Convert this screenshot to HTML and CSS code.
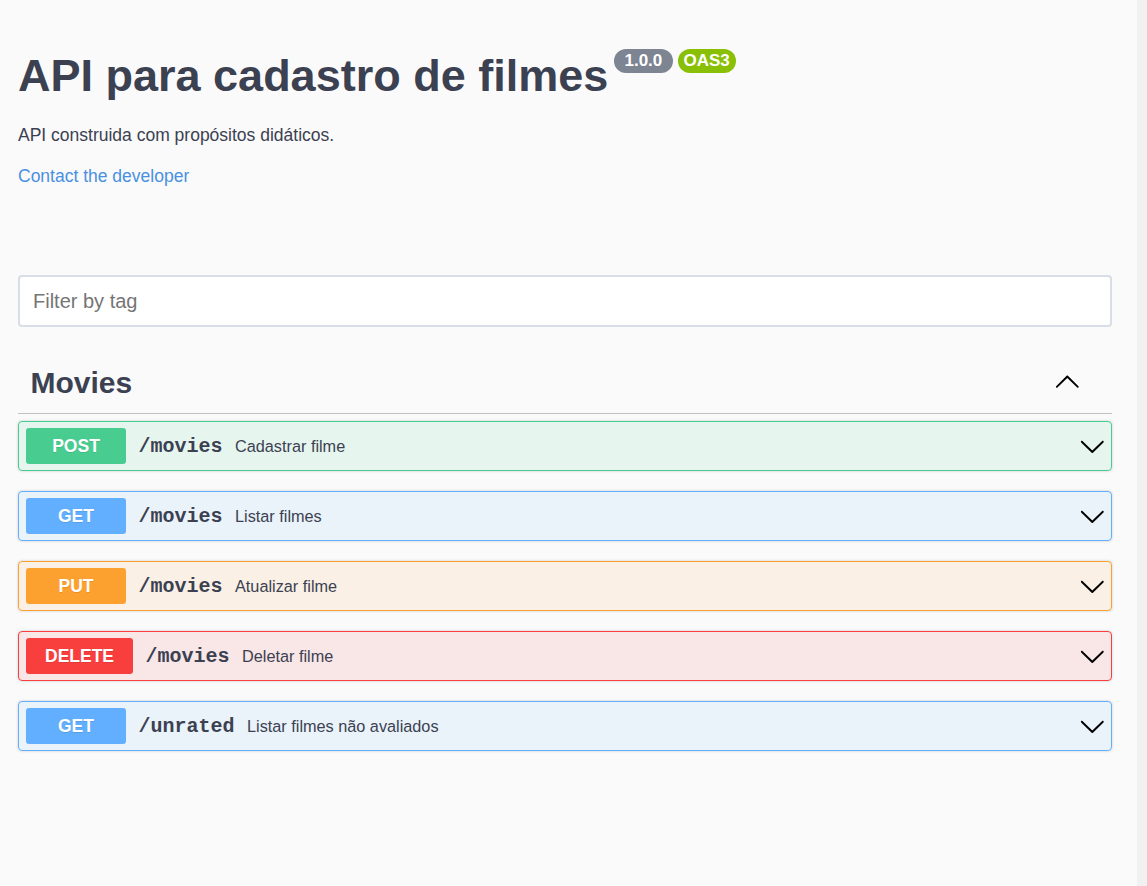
FILE: index.html
```html
<!DOCTYPE html>
<html lang="pt">
<head>
<meta charset="utf-8">
<title>API para cadastro de filmes</title>
<link rel="stylesheet" href="styles.css">
</head>
<body>
<div class="page">
  <main class="content">
    <section class="info">
      <div class="title-row">
        <h1 class="title">API para cadastro de filmes</h1>
        <span class="pill pill-version"> 1.0.0 </span>
        <span class="pill pill-oas">OAS3</span>
      </div>
      <p class="desc">API construida com propósitos didáticos.</p>
      <a class="contact" href="#">Contact the developer</a>
    </section>

    <input class="filter" type="text" placeholder="Filter by tag">

    <section class="tag">
      <div class="tag-head">
        <h3 class="tag-name">Movies</h3>
        <svg class="arrow arrow-up" viewBox="0 0 20 20"><path d="M17.418 6.109c.272-.268.709-.268.979 0s.271.701 0 .969l-7.908 7.83c-.27.268-.707.268-.979 0l-7.908-7.83c-.27-.268-.27-.701 0-.969.271-.268.709-.268.979 0L10 13.25l7.418-7.141z"/></svg>
      </div>

      <div class="opblock op-post">
        <span class="method">POST</span>
        <span class="path">/movies</span>
        <span class="summary">Cadastrar filme</span>
        <svg class="arrow" viewBox="0 0 20 20"><path d="M17.418 6.109c.272-.268.709-.268.979 0s.271.701 0 .969l-7.908 7.83c-.27.268-.707.268-.979 0l-7.908-7.83c-.27-.268-.27-.701 0-.969.271-.268.709-.268.979 0L10 13.25l7.418-7.141z"/></svg>
      </div>

      <div class="opblock op-get">
        <span class="method">GET</span>
        <span class="path">/movies</span>
        <span class="summary">Listar filmes</span>
        <svg class="arrow" viewBox="0 0 20 20"><path d="M17.418 6.109c.272-.268.709-.268.979 0s.271.701 0 .969l-7.908 7.83c-.27.268-.707.268-.979 0l-7.908-7.83c-.27-.268-.27-.701 0-.969.271-.268.709-.268.979 0L10 13.25l7.418-7.141z"/></svg>
      </div>

      <div class="opblock op-put">
        <span class="method">PUT</span>
        <span class="path">/movies</span>
        <span class="summary">Atualizar filme</span>
        <svg class="arrow" viewBox="0 0 20 20"><path d="M17.418 6.109c.272-.268.709-.268.979 0s.271.701 0 .969l-7.908 7.83c-.27.268-.707.268-.979 0l-7.908-7.83c-.27-.268-.27-.701 0-.969.271-.268.709-.268.979 0L10 13.25l7.418-7.141z"/></svg>
      </div>

      <div class="opblock op-delete">
        <span class="method">DELETE</span>
        <span class="path">/movies</span>
        <span class="summary">Deletar filme</span>
        <svg class="arrow" viewBox="0 0 20 20"><path d="M17.418 6.109c.272-.268.709-.268.979 0s.271.701 0 .969l-7.908 7.83c-.27.268-.707.268-.979 0l-7.908-7.83c-.27-.268-.27-.701 0-.969.271-.268.709-.268.979 0L10 13.25l7.418-7.141z"/></svg>
      </div>

      <div class="opblock op-get">
        <span class="method">GET</span>
        <span class="path">/unrated</span>
        <span class="summary">Listar filmes não avaliados</span>
        <svg class="arrow" viewBox="0 0 20 20"><path d="M17.418 6.109c.272-.268.709-.268.979 0s.271.701 0 .969l-7.908 7.83c-.27.268-.707.268-.979 0l-7.908-7.83c-.27-.268-.27-.701 0-.969.271-.268.709-.268.979 0L10 13.25l7.418-7.141z"/></svg>
      </div>
    </section>
  </main>
  <div class="scrolltrack"></div>
</div>
</body>
</html>
```

FILE: styles.css
```css
* { box-sizing: border-box; }

html, body {
  margin: 0;
  padding: 0;
  background: #fafafa;
}

body {
  font-family: "Liberation Sans", Arial, sans-serif;
  color: #3b4151;
}

.page {
  display: flex;
  min-height: 100vh;
}

.content {
  flex: 1;
  padding: 0 25px 40px 18px;
}

.scrolltrack {
  width: 10px;
  flex-shrink: 0;
  background: #f1f1f1;
}

/* ---------- info ---------- */
.info {
  padding-top: 50px;
}

.title-row {
  display: flex;
  align-items: flex-start;
}

.title {
  margin: 0;
  font-size: 45px;
  line-height: 52px;
  font-weight: 700;
  color: #3b4151;
}

.pill {
  margin-top: -1px;
  height: 24px;
  line-height: 24px;
  padding: 0 6px;
  border-radius: 12px;
  color: #fff;
  font-size: 17px;
  font-weight: 700;
  white-space: pre;
}

.pill-version {
  margin-left: 6px;
  padding: 0 5.5px;
  background: #7d8492;
}

.pill-oas {
  margin-left: 5px;
  background: #89bf04;
}

.desc {
  margin: 22px 0 0;
  font-size: 17.5px;
  line-height: 22px;
}

.contact {
  display: block;
  margin-top: 19px;
  font-size: 17.5px;
  line-height: 22px;
  color: #4990e2;
  text-decoration: none;
  width: max-content;
}

/* ---------- filter ---------- */
.filter {
  display: block;
  width: 100%;
  height: 52px;
  margin-top: 88px;
  padding: 0 13px;
  border: 2px solid #d8dde7;
  border-radius: 4px;
  background: #fff;
  font-family: "Liberation Sans", Arial, sans-serif;
  font-size: 20px;
  color: #3b4151;
  outline: none;
}

.filter::placeholder {
  color: #757575;
}

/* ---------- tag ---------- */
.tag {
  margin-top: 25px;
}

.tag-head {
  display: flex;
  align-items: center;
  height: 62px;
  padding: 0 31px 0 12.5px;
  border-bottom: 1px solid rgba(59, 65, 81, 0.3);
  margin-bottom: 7px;
}

.tag-name {
  flex: 1;
  margin: 0;
  font-size: 30px;
  font-weight: 700;
  color: #3b4151;
}

.arrow {
  width: 26.6px;
  height: 26.6px;
  flex-shrink: 0;
  fill: #000;
}

.arrow-up {
  transform: scaleY(-1);
}

/* ---------- operations ---------- */
.opblock {
  display: flex;
  align-items: center;
  height: 50px;
  margin-bottom: 20px;
  padding: 0 5px 0 7px;
  border: 1px solid;
  border-radius: 4px;
  box-shadow: 0 0 3px rgba(0, 0, 0, 0.19);
}

.method {
  min-width: 100px;
  height: 36px;
  line-height: 36px;
  padding: 0 19px;
  border-radius: 3px;
  text-align: center;
  color: #fff;
  font-size: 17.5px;
  font-weight: 700;
  text-shadow: 0 1px 0 rgba(0, 0, 0, 0.1);
}

.path {
  padding: 0 12.5px;
  font-family: "Liberation Mono", "Courier New", monospace;
  font-size: 20px;
  font-weight: 700;
  color: #3b4151;
}

.summary {
  flex: 1;
  font-size: 16.25px;
  color: #3b4151;
}

.op-post { border-color: #49cc90; background: rgba(73, 204, 144, 0.1); }
.op-post .method { background: #49cc90; }

.op-get { border-color: #61affe; background: rgba(97, 175, 254, 0.1); }
.op-get .method { background: #61affe; }

.op-put { border-color: #fca130; background: rgba(252, 161, 48, 0.1); }
.op-put .method { background: #fca130; }

.op-delete { border-color: #f93e3e; background: rgba(249, 62, 62, 0.1); }
.op-delete .method { background: #f93e3e; }
```
